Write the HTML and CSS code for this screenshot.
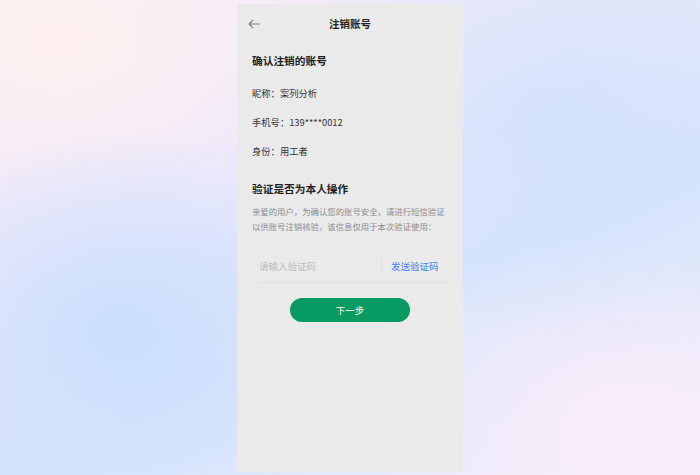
FILE: index.html
```html
<!DOCTYPE html>
<html lang="zh-CN">
<head>
<meta charset="utf-8">
<title>注销账号</title>
<link rel="stylesheet" href="styles.css">
</head>
<body>
<div class="stage">
  <div class="phone">
    <header class="nav">
      <span class="back">
        <svg width="12" height="10" viewBox="0 0 12 10"><path d="M11.2 5H1.2M4.8 1.4L1.2 5l3.6 3.6" fill="none" stroke="#7a7a7a" stroke-width="1.2" stroke-linecap="round" stroke-linejoin="round"/></svg>
      </span>
      <h1 class="nav-title">注销账号</h1>
    </header>
    <main class="content">
      <h2 class="sec-title">确认注销的账号</h2>
      <ul class="info">
        <li>昵称：案列分析</li>
        <li>手机号：139****0012</li>
        <li>身份：用工者</li>
      </ul>
      <h2 class="sec-title sec-verify">验证是否为本人操作</h2>
      <p class="desc">亲爱的用户，为确认您的账号安全，请进行短信验证以供账号注销核验，该信息仅用于本次验证使用：</p>
      <div class="code-row">
        <input class="code-input" type="text" placeholder="请输入验证码">
        <span class="divider"></span>
        <span class="send">发送验证码</span>
      </div>
      <div class="btn-wrap">
        <button class="next" type="button">下一步</button>
      </div>
    </main>
  </div>
</div>
</body>
</html>
```
FILE: styles.css
```css
html, body {
  margin: 0;
  padding: 0;
  height: 100%;
}
body {
  font-family: "Noto Sans CJK SC", "Noto Sans", sans-serif;
  background:
    radial-gradient(ellipse 300px 220px at 560px 120px, rgba(210,226,251,0.9), rgba(210,226,251,0) 100%),
    radial-gradient(ellipse 260px 200px at 120px 330px, rgba(200,222,252,0.95), rgba(200,222,252,0) 100%),
    radial-gradient(ellipse 260px 180px at 620px 420px, rgba(250,236,250,0.95), rgba(250,236,250,0) 100%),
    radial-gradient(ellipse 240px 160px at 60px 40px, rgba(253,240,238,1), rgba(253,240,238,0) 100%),
    linear-gradient(155deg, #fbeef6 0%, #eee9fb 35%, #d7e5fb 60%, #e3eafb 80%, #f6eefb 100%);
  overflow: hidden;
}
.stage {
  display: flex;
  justify-content: center;
  padding-top: 4px;
}
.phone {
  width: 226px;
  height: 468px;
  background: #eaeaea;
  display: flex;
  flex-direction: column;
}
.nav {
  height: 40px;
  display: flex;
  align-items: center;
  justify-content: center;
  position: relative;
}
.back {
  position: absolute;
  left: 11px;
  top: 15px;
  display: flex;
}
.nav-title {
  margin: 0;
  font-size: 10.5px;
  font-weight: 700;
  color: #222;
  line-height: 40px;
}
.content {
  padding: 0 15px;
  display: flex;
  flex-direction: column;
}
.sec-title {
  margin: 9px 0 0;
  font-size: 10.7px;
  line-height: 16px;
  font-weight: 700;
  color: #222;
}
.info {
  list-style: none;
  margin: 9.5px 0 0;
  padding: 0;
}
.info li {
  font-size: 9.3px;
  line-height: 29px;
  color: #333;
}
.sec-verify {
  margin-top: 15.5px;
}
.desc {
  margin: 6.5px 0 0;
  font-size: 8.4px;
  line-height: 15px;
  color: #8a8a8a;
}
.code-row {
  margin: 16.5px 0 0 6px;
  height: 32px;
  border-bottom: 1px solid #e2e2e2;
  display: flex;
  align-items: center;
}
.code-input {
  flex: 1;
  min-width: 0;
  border: none;
  background: transparent;
  outline: none;
  padding: 0 0 0 1px;
  margin: 0;
  font-family: inherit;
  font-size: 9.5px;
  color: #333;
}
.code-input::placeholder {
  color: #bdbdbd;
}
.divider {
  width: 1px;
  height: 16px;
  background: #e2e2e2;
  margin-right: 9px;
}
.send {
  font-size: 9.5px;
  color: #3a7ff0;
  padding-right: 9.5px;
}
.btn-wrap {
  display: flex;
  justify-content: center;
  margin-top: 15px;
}
.next {
  width: 120px;
  height: 24px;
  border: none;
  border-radius: 12px;
  background: #079a62;
  color: #fff;
  font-family: inherit;
  font-size: 9.5px;
  padding: 0;
}
```
